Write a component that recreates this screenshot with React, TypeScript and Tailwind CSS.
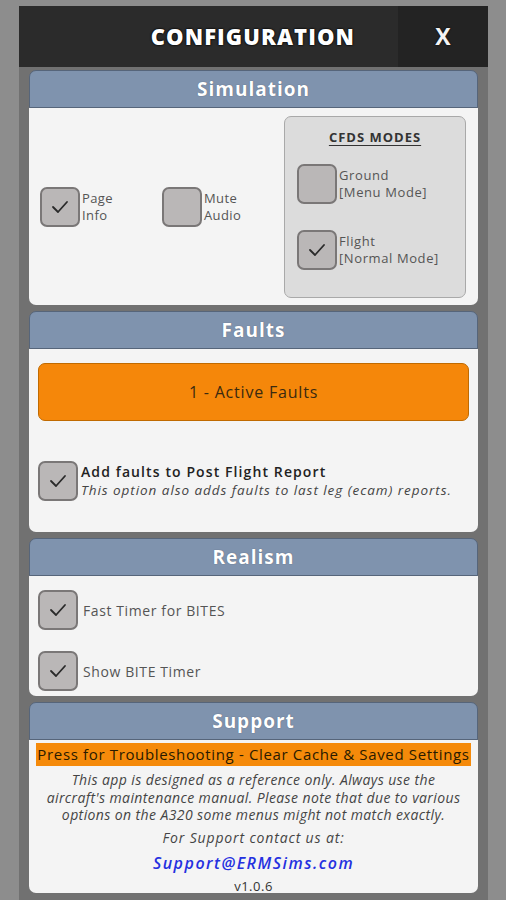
import type { ReactNode } from 'react';

const font = { fontFamily: '"Open Sans", "Noto Sans", sans-serif' };

function Check({ checked }: { checked?: boolean }) {
  return (
    <div className="w-[40px] h-[40px] shrink-0 rounded-[7px] border-2 border-[#7a7777] bg-[#bab7b7] flex items-center justify-center">
      {checked && (
        <svg width="20" height="16" viewBox="0 0 20 16">
          <polyline points="3,8 8,13 17,3" fill="none" stroke="#2a2a2a" strokeWidth="1.8" strokeLinecap="round" strokeLinejoin="round" />
        </svg>
      )}
    </div>
  );
}

function Section({ title, children, bodyClass }: { title: string; children: ReactNode; bodyClass: string }) {
  return (
    <div className="mx-[10px]">
      <div className="h-[38px] rounded-t-[7px] border border-[#56657a] bg-[#7f93ae] flex items-center justify-center">
        <span className="text-white font-bold text-[19px] tracking-[1px]" style={{ textShadow: '0 0 1px #4a5568' }}>{title}</span>
      </div>
      <div className={`bg-[#f4f4f4] rounded-b-[7px] ${bodyClass}`}>{children}</div>
    </div>
  );
}

export default function App() {
  return (
    <div className="w-[506px] h-[900px] bg-[#8d8d8d] pt-[6px] pl-[19px] pr-[18px] overflow-hidden" style={font}>
      <div className="bg-[#717171] h-[894px] flex flex-col">
        <div className="h-[61px] bg-[#2b2b2b] flex">
          <div className="flex-1 flex items-center justify-end pr-[43px]">
            <span className="text-white font-extrabold text-[22px] tracking-[1.1px]" style={{ textShadow: '0 0 2px #000, 0 0 2px #000' }}>CONFIGURATION</span>
          </div>
          <div className="w-[90px] bg-[#232323] flex items-center justify-center">
            <span className="text-[#f4f4f4] font-bold text-[23px]" style={{ textShadow: '0 0 2px #000' }}>X</span>
          </div>
        </div>

        <div className="pt-[3px] flex flex-col gap-[6px]">
          <Section title="Simulation" bodyClass="h-[197px] flex items-center pl-[11px] pr-[12px]">
            <div className="flex items-center gap-[2px] text-[13px] leading-[17px] text-[#555] tracking-[0.4px] w-[122px]">
              <Check checked />
              <span>Page<br />Info</span>
            </div>
            <div className="flex items-center gap-[2px] text-[13px] leading-[17px] text-[#555] tracking-[0.4px] w-[122px]">
              <Check />
              <span>Mute<br />Audio</span>
            </div>
            <div className="ml-auto w-[182px] h-[182px] rounded-[7px] border border-[#a9a9a9] bg-[#dcdcdc] pl-[12px] pt-[11px]">
              <div className="text-center pr-[12px] text-[13px] font-bold text-[#333] underline underline-offset-[3px] tracking-[1px]">CFDS MODES</div>
              <div className="mt-[17px] flex items-center gap-[2px] text-[13px] leading-[17px] text-[#555] tracking-[0.6px]">
                <Check />
                <span>Ground<br />[Menu Mode]</span>
              </div>
              <div className="mt-[26px] flex items-center gap-[2px] text-[13px] leading-[17px] text-[#555] tracking-[0.6px]">
                <Check checked />
                <span>Flight<br />[Normal Mode]</span>
              </div>
            </div>
          </Section>

          <Section title="Faults" bodyClass="h-[183px] px-[9px] pt-[14px]">
            <div className="h-[58px] rounded-[7px] border border-[#c06a00] bg-[#f5870a] flex items-center justify-center">
              <span className="text-[16px] text-[#3a2a10] tracking-[0.8px]">1 - Active Faults</span>
            </div>
            <div className="mt-[40px] flex items-center gap-[3px]">
              <Check checked />
              <div>
                <div className="text-[14px] font-semibold text-[#222] tracking-[1.1px] leading-[18px]">Add faults to Post Flight Report</div>
                <div className="text-[13.5px] italic text-[#444] tracking-[0.95px] leading-[18px] whitespace-nowrap">This option also adds faults to last leg (ecam) reports.</div>
              </div>
            </div>
          </Section>

          <Section title="Realism" bodyClass="h-[120px] px-[9px] pt-[14px] flex flex-col gap-[21px]">
            <div className="flex items-center gap-[5px] text-[14px] text-[#555] tracking-[0.6px]">
              <Check checked />
              <span>Fast Timer for BITES</span>
            </div>
            <div className="flex items-center gap-[5px] text-[14px] text-[#555] tracking-[0.6px]">
              <Check checked />
              <span>Show BITE Timer</span>
            </div>
          </Section>

          <Section title="Support" bodyClass="h-[153px] px-[7px] pt-[3px] text-center">
            <div className="h-[23px] bg-[#f58a0a] flex items-center justify-center">
              <span className="text-[15px] text-[#2a1a00] tracking-[0.65px] whitespace-nowrap">Press for Troubleshooting - Clear Cache &amp; Saved Settings</span>
            </div>
            <div className="mt-[5px] text-[14px] italic text-[#444] leading-[17.5px] tracking-[0.4px] whitespace-nowrap">
              This app is designed as a reference only. Always use the<br />
              aircraft's maintenance manual. Please note that due to various<br />
              options on the A320 some menus might not match exactly.
            </div>
            <div className="mt-[5px] text-[14px] italic text-[#444] leading-[18px] tracking-[0.85px]">For Support contact us at:</div>
            <div className="mt-[7px] text-[16px] italic font-semibold text-[#2430e0] tracking-[1.5px] leading-[18px]">Support@ERMSims.com</div>
            <div className="mt-[6px] text-[13px] text-[#333] leading-[16px] tracking-[0.5px]">v1.0.6</div>
          </Section>
        </div>
      </div>
    </div>
  );
}
